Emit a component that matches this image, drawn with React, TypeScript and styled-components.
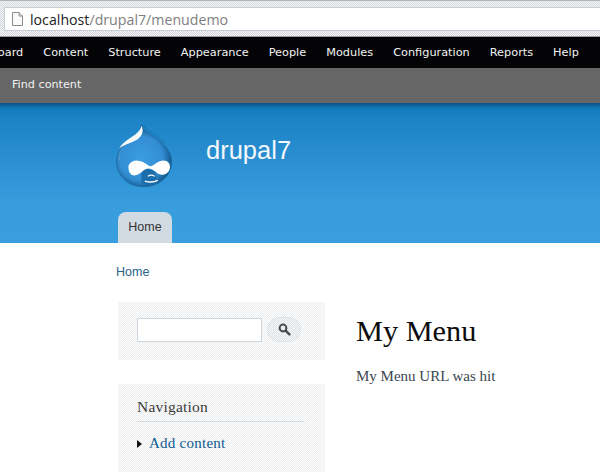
import React from "react";
import styled, { createGlobalStyle } from "styled-components";

const Global = createGlobalStyle`
  html, body { margin: 0; padding: 0; background: #fff; }
  body { width: 600px; height: 472px; overflow: hidden; }
`;
const Page = styled.div`
  width: 600px; height: 472px; overflow: hidden; display: flex; flex-direction: column;
`;
const Chrome = styled.div`
  height: 37px; box-sizing: border-box; padding: 7px 0 6px 4px; flex: none;
  background-color: #e3e6ea;
  background-image: conic-gradient(#d4d8de 25%, #f4f5f6 0 50%, #d4d8de 0 75%, #f4f5f6 0);
  background-size: 2px 2px;
  border-top: 1px solid #b4b4b4;
  border-bottom: 1px solid #9a9a9a;
`;
const Address = styled.div`
  height: 24px; background: #fff; display: flex; align-items: center; gap: 6px; padding-left: 6px;
  border: 1px solid #c8ccd2; border-right: none; border-radius: 2px 0 0 2px; box-sizing: border-box; margin-top: -1px;
`;
const Url = styled.span`
  font: 14.2px "Open Sans", "Liberation Sans", sans-serif; color: #808080;
  b { font-weight: 400; color: #222; }
`;
const AdminBar = styled.nav`
  height: 31px; background: #040406; flex: none; display: flex; align-items: center; gap: 20px;
  margin-left: -38px; padding-bottom: 1px; box-sizing: border-box;
`;
const AdminLink = styled.span`
  font: 11.3px "DejaVu Sans", Verdana, sans-serif; color: #f2f2f2; white-space: nowrap;
`;
const Shortcuts = styled.div`
  height: 35px; background: #666; flex: none; display: flex; align-items: center; padding: 0 0 2px 12px; box-sizing: border-box;
`;
const ShortcutLink = styled.span`
  font: 11.2px "DejaVu Sans", Verdana, sans-serif; color: #f2f2f2;
`;
const Header = styled.header`
  height: 140px; flex: none; box-sizing: border-box; padding: 14px 0 0 115px; display: flex; flex-direction: column;
  background: linear-gradient(#0b4f85 0, #1278b8 5px, #1a83c6 14px, #2c90d2 60px, #379ddd 100px, #389ede 140px);
`;
const Brand = styled.div`
  display: flex; align-items: center; gap: 33px; height: 76px;
`;
const SiteName = styled.div`
  font: 25.5px "Liberation Sans", Arial, sans-serif; color: #f4f8fb; margin: -10px 0 0 0;
`;
const Tabs = styled.div`
  display: flex; margin: 19px 0 0 3px;
`;
const Tab = styled.div`
  width: 54px; height: 31px; box-sizing: border-box; background: #d3dbe2; border-radius: 8px 8px 0 0;
  text-align: center; padding-top: 8px;
  font: 12.5px "Liberation Sans", Arial, sans-serif; color: #333;
`;
const Breadcrumb = styled.div`
  font: 12.5px "Liberation Sans", Arial, sans-serif; color: #2b628a; padding: 22px 0 0 116px; height: 37px; flex: none; box-sizing: content-box;
`;
const Columns = styled.div`
  display: flex; padding: 0 0 0 118px; gap: 31px;
`;
const Sidebar = styled.aside`
  width: 207px; flex: none; display: flex; flex-direction: column; gap: 24px;
`;
const Block = styled.section`
  background-color: #f5f6f7;
  background-image: conic-gradient(#eceef0 25%, #fdfdfd 0 50%, #eceef0 0 75%, #fdfdfd 0);
  background-size: 2px 2px;
  box-sizing: border-box;
`;
const SearchBlock = styled(Block)`
  height: 58px; display: flex; align-items: center; padding: 0 0 3px 19px; gap: 5px;
`;
const SearchInput = styled.div`
  width: 125px; height: 24px; box-sizing: border-box; background: #fff; border: 1px solid #ccd3da;
`;
const SearchButton = styled.div`
  width: 34px; height: 25px; border-radius: 13px; border: 1px solid #dfe3e7; box-sizing: border-box;
  background-color: #ebedef;
  background-image: conic-gradient(#dfe2e5 25%, #f6f7f8 0 50%, #dfe2e5 0 75%, #f6f7f8 0);
  background-size: 2px 2px;
  display: flex; align-items: center; justify-content: center;
`;
const NavBlock = styled(Block)`
  height: 88px; padding: 14px 19px 0;
`;
const NavTitle = styled.h2`
  margin: 0; font: 400 15.5px/18px "Liberation Serif", "Times New Roman", serif; color: #3b3b3b; letter-spacing: .2px;
  padding-bottom: 5px; border-bottom: 1px solid #d6dbdf; width: 168px;
`;
const NavItem = styled.div`
  display: flex; align-items: center; gap: 7px; margin-top: 13px;
`;
const Arrow = styled.span`
  width: 0; height: 0; border-left: 5px solid #111; border-top: 4px solid transparent; border-bottom: 4px solid transparent;
`;
const NavLink = styled.span`
  font: 15px/17px "Liberation Serif", "Times New Roman", serif; color: #0f5a92; letter-spacing: .25px;
`;
const Main = styled.main`
  padding-top: 13px;
`;
const Title = styled.h1`
  margin: 0; font: 400 30.3px/33px "Liberation Serif", "Times New Roman", serif; color: #0d0d0d;
`;
const Body = styled.p`
  margin: 20px 0 0; font: 15px/17px "Liberation Serif", "Times New Roman", serif; color: #3b4650;
`;

const FileIcon = () => (
  <svg width="13" height="16" viewBox="0 0 13 16" fill="none">
    <path d="M1.5 1.5h6.5l3.5 3.5v9.5h-10z" fill="#fafafa" stroke="#8c8c8c" />
    <path d="M8 1.5v3.5h3.5" stroke="#8c8c8c" />
  </svg>
);
const SearchIcon = () => (
  <svg width="13" height="13" viewBox="0 0 13 13" fill="none">
    <circle cx="5" cy="5" r="3.4" stroke="#4a4a4a" strokeWidth="2" />
    <path d="M7.8 7.8l3.6 3.6" stroke="#4a4a4a" strokeWidth="2.4" strokeLinecap="round" />
  </svg>
);
const Logo = () => (
  <svg width="58" height="67" viewBox="20 10 175 200" style={{ flex: "none" }}>
    <defs>
      <radialGradient id="drop" gradientUnits="userSpaceOnUse" cx="98" cy="118" r="98">
        <stop offset="0" stopColor="#3b9de3" />
        <stop offset=".68" stopColor="#338dd3" />
        <stop offset=".9" stopColor="#17639c" />
        <stop offset="1" stopColor="#0f5688" />
      </radialGradient>
    </defs>
    <path d="M100 15c3 18 26 30 50 48 24 18 41 40 41 65 0 44-38 76-85 76-48 0-81-34-81-76 0-34 24-56 50-72 10-6 22-16 25-41z" fill="url(#drop)" stroke="#1a699f" strokeWidth="2.5" />
    <path d="M108 20c14 20 40 30 62 52" stroke="#125a8e" strokeWidth="3" strokeDasharray="3 3" fill="none" />
    <path d="M34 122c-5-26 10-46 28-58" stroke="#caa98f" strokeWidth="2.5" strokeDasharray="2 6" fill="none" />
    <path d="M33 88C45 68 66 58 82 46 92 38 98 30 100 20c6 12 5 26-8 38-14 12-38 16-59 30z" fill="#f6f8fa" />
    <path d="M100 160c12-12 28-12 42 0l4 34c-14 6-32 6-46 0z" fill="#1b6ea9" />
    <path d="M61 150c-3-14 9-25 24-25 14 0 26 8 36 15 6 3 10 3 15-1 9-7 18-14 30-14 13 0 20 9 20 19 0 13-10 24-22 24-14 0-20-10-32-16-9-4-15-4-23 1-9 6-17 17-31 17-10 0-16-8-17-20z" fill="#fff" />
    <path d="M110 187c12 4 27 4 39-2" stroke="#fff" strokeWidth="4" fill="none" />
    <path d="M119 173c6-5 14-5 21 0" stroke="#fff" strokeWidth="3.5" fill="none" />
  </svg>
);

const adminLinks = ["Dashboard", "Content", "Structure", "Appearance", "People", "Modules", "Configuration", "Reports", "Help"];

export default function App() {
  return (
    <Page>
      <Global />
      <Chrome>
        <Address>
          <FileIcon />
          <Url><b>localhost</b>/drupal7/menudemo</Url>
        </Address>
      </Chrome>
      <AdminBar>
        {adminLinks.map((l) => <AdminLink key={l}>{l}</AdminLink>)}
      </AdminBar>
      <Shortcuts><ShortcutLink>Find content</ShortcutLink></Shortcuts>
      <Header>
        <Brand>
          <Logo />
          <SiteName>drupal7</SiteName>
        </Brand>
        <Tabs><Tab>Home</Tab></Tabs>
      </Header>
      <Breadcrumb>Home</Breadcrumb>
      <Columns>
        <Sidebar>
          <SearchBlock>
            <SearchInput />
            <SearchButton><SearchIcon /></SearchButton>
          </SearchBlock>
          <NavBlock>
            <NavTitle>Navigation</NavTitle>
            <NavItem><Arrow /><NavLink>Add content</NavLink></NavItem>
          </NavBlock>
        </Sidebar>
        <Main>
          <Title>My Menu</Title>
          <Body>My Menu URL was hit</Body>
        </Main>
      </Columns>
    </Page>
  );
}
